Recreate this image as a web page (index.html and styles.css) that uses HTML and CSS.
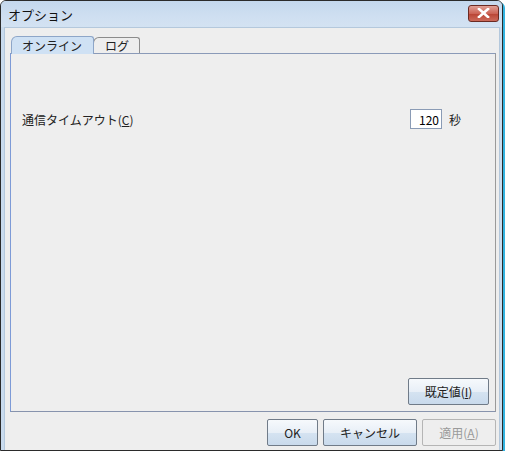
FILE: index.html
```html
<!DOCTYPE html>
<html lang="ja">
<head>
  <meta charset="UTF-8">
  <title>オプション</title>
  <link rel="stylesheet" href="styles.css">
</head>
<body>
  <div class="window">
    <div class="titlebar">
      <span class="title">オプション</span>
      <button class="close-button">
        <svg width="13" height="10" viewBox="0 0 13 10">
          <path d="M2 1 L11 9 M11 1 L2 9" stroke="#ffffff" stroke-width="2.6" stroke-linecap="square"/>
        </svg>
      </button>
    </div>

    <div class="client">
      <div class="tabs">
        <div class="tab selected">オンライン</div>
        <div class="tab">ログ</div>
      </div>

      <div class="panel">
        <div class="row">
          <label class="label">通信タイムアウト(<u>C</u>)</label>
          <div class="field-group">
            <input type="text" class="number-input" value="120">
            <span class="unit">秒</span>
          </div>
        </div>

        <div class="panel-buttons">
          <button class="btn default-button">既定値(<u>I</u>)</button>
        </div>
      </div>

      <div class="footer">
        <button class="btn ok-button">OK</button>
        <button class="btn cancel-button">キャンセル</button>
        <button class="btn apply-button" disabled>適用(<u>A</u>)</button>
      </div>
    </div>
  </div>
</body>
</html>
```

FILE: styles.css
```css
/* Dialog window styles */
body {
  margin: 0;
  padding: 0;
  background-color: #ffffff;
  font-family: "Noto Sans CJK JP", "DejaVu Sans", sans-serif;
  font-size: 12px;
  color: #222;
}

.window {
  width: 501px;
  height: 449px;
  border: 1px solid #2b2b2b;
  border-radius: 6px 6px 0 0;
  box-shadow: 2px 2px 0 #33b3e0;
  background-color: #c9dbee;
  display: flex;
  flex-direction: column;
  overflow: hidden;
}

.titlebar {
  height: 26px;
  display: flex;
  align-items: center;
  justify-content: space-between;
  padding: 0 3px 0 7px;
  background: linear-gradient(#c4d8ed, #cfdff1 60%, #d3e2f2);
}

.title {
  font-size: 13px;
  color: #111;
}

.close-button {
  width: 31px;
  height: 17px;
  margin-top: -2px;
  border: 1px solid #6b2a22;
  border-radius: 3px;
  background: linear-gradient(#e0a096, #cc6456 50%, #b94434 52%, #cc6a5a);
  display: flex;
  align-items: center;
  justify-content: center;
  padding: 0;
}

.client {
  flex: 1;
  margin: 0 2px 0 3px;
  border: 1px solid #b4c8dc;
  border-bottom: none;
  background-color: #eeeeee;
  padding: 7px 3px 4px 5px;
  display: flex;
  flex-direction: column;
}

.tabs {
  display: flex;
  align-items: flex-end;
  padding-left: 2px;
  height: 18px;
}

.tab {
  height: 15px;
  padding: 0 10px 0 11px;
  border: 1px solid #8c8c8c;
  border-bottom: none;
  border-radius: 6px 3px 0 0;
  background-color: #eeeeee;
  line-height: 15px;
  margin-left: -1px;
}

.tab.selected {
  height: 17px;
  line-height: 17px;
  padding: 0 11px 0 10px;
  background-color: #cfe1f4;
  border-color: #8ea6c8;
  position: relative;
  z-index: 1;
  margin-bottom: -1px;
}

.panel {
  flex: 1;
  border: 1px solid #8a9ab8;
  border-left-color: #7d9ad6;
  border-right-color: #9a9a9a;
  border-bottom-color: #8793ad;
  display: flex;
  flex-direction: column;
  padding: 55px 6px 6px 11px;
}

.row {
  display: flex;
  align-items: center;
  justify-content: space-between;
  padding-right: 28px;
}

.label {
  font-size: 12px;
}

.field-group {
  display: flex;
  align-items: center;
  gap: 7px;
}

.number-input {
  width: 26px;
  height: 16px;
  padding: 1px 2px;
  border: 1px solid #8a9bb5;
  text-align: right;
  font-family: "Noto Sans CJK JP", "DejaVu Sans", sans-serif;
  font-size: 12px;
  background-color: #fff;
}

.panel-buttons {
  margin-top: auto;
  display: flex;
  justify-content: flex-end;
}

.btn {
  height: 27px;
  border: 1px solid #707b88;
  border-radius: 2px;
  background: linear-gradient(#f6f9fc, #e8eff7 50%, #d5e3f1 52%, #c9daec);
  font-family: "Noto Sans CJK JP", "DejaVu Sans", sans-serif;
  font-size: 12px;
  color: #222;
  padding: 0;
}

.default-button {
  width: 81px;
}

.footer {
  display: flex;
  justify-content: flex-end;
  gap: 5px;
  padding-top: 7px;
}

.ok-button {
  width: 51px;
}

.cancel-button {
  width: 94px;
}

.apply-button {
  width: 74px;
  background: #eeeeee;
  border-color: #b5b5b5;
  color: #9a9a9a;
}
```
